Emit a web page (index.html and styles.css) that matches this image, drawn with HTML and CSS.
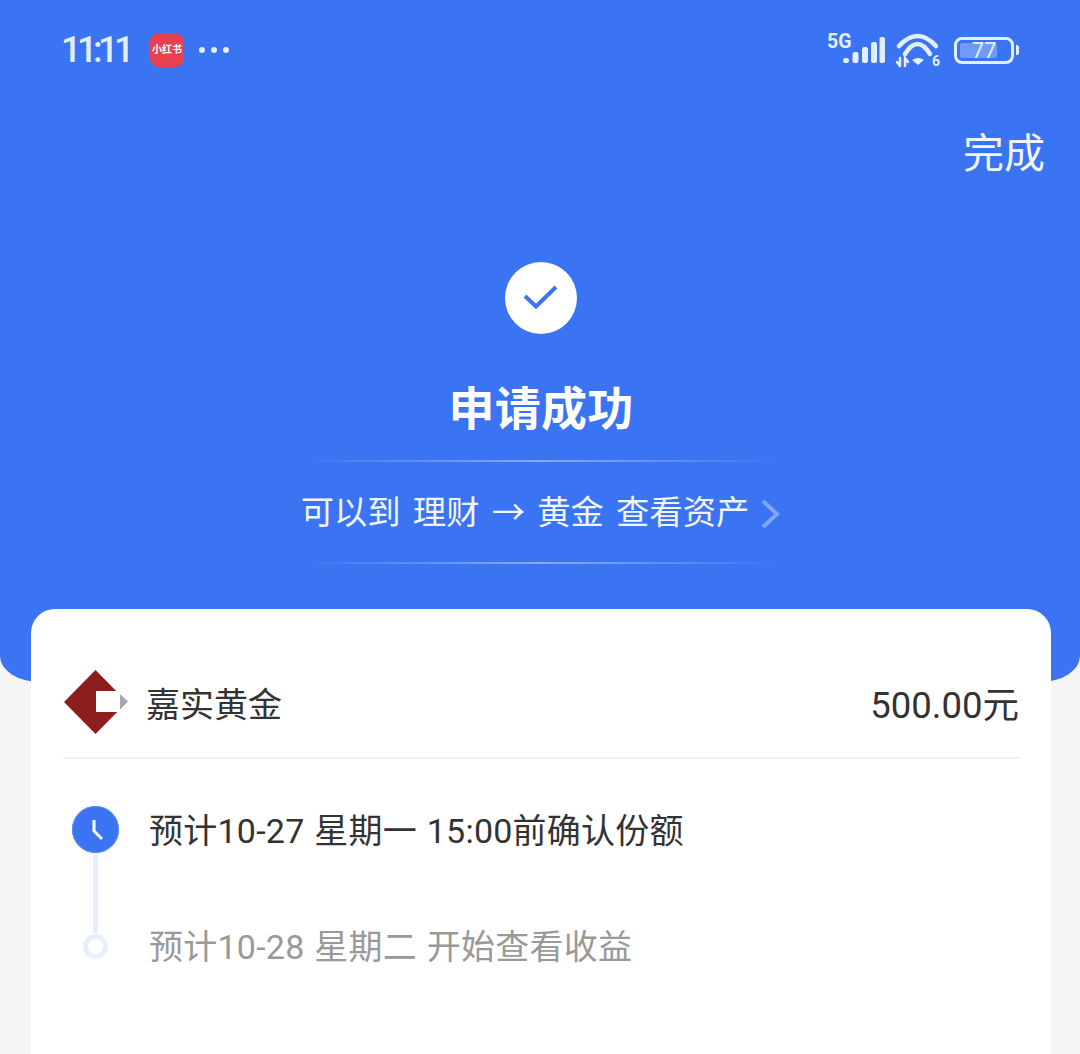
FILE: index.html
```html
<!DOCTYPE html>
<html lang="zh">
<head>
  <meta charset="UTF-8">
  <title>申请成功</title>
  <link rel="stylesheet" href="styles.css">
</head>
<body>
  <div class="hero">
    <!-- 状态栏 -->
    <div class="status-bar">
      <div class="status-left">
        <span class="clock">11:11</span>
        <span class="app-badge">小红书</span>
        <span class="dots"><i></i><i></i><i></i></span>
      </div>
      <div class="status-right">
        <svg class="signal" width="61" height="40" viewBox="0 0 61 40">
          <text x="3" y="18" class="net-label">5G</text>
          <rect x="19" y="28" width="6" height="5" rx="2.500" />
          <rect x="28.500" y="22" width="6" height="11" rx="2" />
          <rect x="38" y="17" width="6" height="16" rx="2" />
          <rect x="47" y="12" width="6" height="21" rx="2" />
          <rect x="55.500" y="7" width="5.500" height="26" rx="2" />
        </svg>
        <svg class="wifi" width="46" height="40" viewBox="0 0 46 40">
          <path d="M5 16 Q23.500 -4 42 16" />
          <path d="M11 24 Q23.500 4 36 24" />
          <path d="M24 35 L18 30 Q24 26 30 30 Z" class="wifi-fill" />
          <path d="M6 28 v8 M3 32 l3 4 M11 36 v-8 l3 4" class="wifi-thin" />
          <text x="38" y="36" class="wifi-six">6</text>
        </svg>
        <div class="battery">
          <div class="battery-body">
            <div class="battery-level" style="width: 77%"></div>
            <span class="battery-num">77</span>
          </div>
          <div class="battery-cap"></div>
        </div>
      </div>
    </div>

    <div class="done-row"><span class="done-btn">完成</span></div>

    <div class="result">
      <div class="check-circle">
        <svg width="38" height="30" viewBox="0 0 38 30">
          <path d="M3 13 L14 23.500 L34 4" />
        </svg>
      </div>
      <h1 class="result-title">申请成功</h1>
      <div class="tip-box">
        <span class="tip-text">可以到 理财 → 黄金 查看资产</span>
        <svg class="tip-arrow" width="20" height="30" viewBox="0 0 20 30">
          <path d="M2 2 L16 15 L2 28" />
        </svg>
      </div>
    </div>
  </div>

  <div class="card">
    <div class="fund-row">
      <div class="fund-info">
        <svg class="fund-logo" width="66" height="66" viewBox="0 0 66 66">
          <path d="M32.500 1 L64 33 L32.500 65 L1 33 Z" fill="#8c1e1c" />
          <rect x="33" y="22" width="24" height="21" fill="#fff" />
          <path d="M57 25 L65 32.500 L57 40 Z" fill="#a9a9ad" />
        </svg>
        <span class="fund-name">嘉实黄金</span>
      </div>
      <span class="fund-amount">500.00元</span>
    </div>

    <div class="timeline">
      <div class="step">
        <div class="step-marker">
          <div class="step-clock">
            <svg width="46" height="46" viewBox="0 0 46 46">
              <path d="M22 14 V25 L30 33" />
            </svg>
          </div>
          <div class="step-line"></div>
        </div>
        <div class="step-text">预计10-27 星期一 15:00前确认份额</div>
      </div>
      <div class="step step-next">
        <div class="step-marker">
          <div class="step-ring"></div>
        </div>
        <div class="step-text">预计10-28 星期二 开始查看收益</div>
      </div>
    </div>
  </div>
</body>
</html>
```

FILE: styles.css
```css
html, body {
  margin: 0;
  padding: 0;
}

body {
  width: 1080px;
  height: 1054px;
  overflow: hidden;
  background: #f5f5f5;
  font-family: "Roboto", "Noto Sans CJK SC", sans-serif;
}

.hero {
  height: 682px;
  box-sizing: border-box;
  background: #3a74f2;
  border-radius: 0 0 40px 40px / 0 0 26px 26px;
  color: #fff;
}

/* === 状态栏 === */
.status-bar {
  height: 100px;
  box-sizing: border-box;
  padding: 30px 61px 0 61px;
  display: flex;
  justify-content: space-between;
  align-items: flex-start;
}

.status-left {
  display: flex;
  align-items: center;
  height: 40px;
}

.clock {
  font-size: 36px;
  font-weight: 500;
  letter-spacing: -4.500px;
  color: #e3eefe;
  width: 89px;
}

.app-badge {
  width: 34px;
  height: 34px;
  border-radius: 9px;
  background: #e8404f;
  font-size: 10px;
  font-weight: 700;
  line-height: 34px;
  text-align: center;
  white-space: nowrap;
}

.dots {
  display: flex;
  gap: 6px;
  margin-left: 15px;
}

.dots i {
  width: 6px;
  height: 6px;
  border-radius: 50%;
  background: #e3eefe;
}

.status-right {
  display: flex;
  align-items: flex-start;
  gap: 9px;
}

.signal rect {
  fill: #e3eefe;
}

.net-label {
  font-size: 19.500px;
  font-weight: 700;
  fill: #e3eefe;
}

.wifi path {
  fill: none;
  stroke: #e3eefe;
  stroke-width: 4.500px;
  stroke-linecap: round;
}

.wifi .wifi-fill {
  fill: #e3eefe;
  stroke: none;
}

.wifi .wifi-thin {
  stroke-width: 2.500px;
}

.wifi-six {
  font-size: 14px;
  font-weight: 700;
  fill: #e3eefe;
}

.battery {
  display: flex;
  align-items: center;
  gap: 2px;
  margin-left: 5px;
  height: 40px;
}

.battery-body {
  position: relative;
  width: 60px;
  height: 27px;
  box-sizing: border-box;
  border: 3px solid #e3eefe;
  border-radius: 8px;
  padding: 3px;
}

.battery-level {
  height: 100%;
  background: #6f9af6;
  border-radius: 2px;
}

.battery-num {
  position: absolute;
  left: 0;
  right: 0;
  top: 0;
  text-align: center;
  font-size: 22px;
  line-height: 21px;
  color: #e3eefe;
}

.battery-cap {
  width: 3px;
  height: 10px;
  background: #e3eefe;
  border-radius: 0 2px 2px 0;
}

/* === 结果区 === */
.done-row {
  display: flex;
  justify-content: flex-end;
  padding-right: 35px;
  height: 62px;
  margin-top: 23px;
}

.done-btn {
  font-size: 41px;
  line-height: 62px;
  color: #f1f5fe;
}

.result {
  display: flex;
  flex-direction: column;
  align-items: center;
  padding-top: 77px;
}

.check-circle {
  width: 72px;
  height: 72px;
  margin-left: 2px;
  border-radius: 50%;
  background: #fff;
  display: flex;
  align-items: center;
  justify-content: center;
}

.check-circle svg path {
  fill: none;
  stroke: #3a74f2;
  stroke-width: 4px;
}

.result-title {
  margin: 0;
  padding-top: 40px;
  font-size: 46px;
  font-weight: 700;
  letter-spacing: 0.200px;
  line-height: 70px;
  margin-left: 2px;
}

.tip-box {
  width: 476px;
  height: 104px;
  box-sizing: border-box;
  margin-top: 16px;
  margin-left: 2px;
  padding-bottom: 6px;
  display: flex;
  align-items: center;
  justify-content: center;
  gap: 12px;
  border-top: 2px solid;
  border-bottom: 2px solid;
  border-image: linear-gradient(90deg, rgba(255,255,255,0), rgba(255,255,255,0.4) 50%, rgba(255,255,255,0)) 1;
}

.tip-text {
  font-size: 33.300px;
  word-spacing: 4px;
  white-space: nowrap;
  color: #f1f5fe;
}

.tip-arrow {
  flex-shrink: 0;
  margin-top: 10px;
}

.tip-arrow path {
  fill: none;
  stroke: #7fa5f7;
  stroke-width: 4px;
}

/* === 卡片 === */
.card {
  position: relative;
  margin: -73px 29px 0 31px;
  height: 445px;
  background: #fff;
  border-radius: 24px 24px 0 0;
  padding: 0 32px;
}

.fund-row {
  height: 150px;
  display: flex;
  align-items: center;
  justify-content: space-between;
  border-bottom: 2px solid #f0f0f0;
  padding-top: 38px;
  box-sizing: border-box;
}

.fund-info {
  display: flex;
  align-items: center;
  gap: 17px;
}

.fund-logo {
  display: block;
}

.fund-name {
  font-size: 34px;
  color: #333;
}

.fund-amount {
  font-size: 36.500px;
  color: #333;
}

.timeline {
  padding-top: 47px;
}

.step {
  display: flex;
  height: 116px;
}

.step-marker {
  width: 86px;
  padding-left: 9px;
  box-sizing: border-box;
  display: flex;
  flex-direction: column;
  align-items: flex-start;
  flex-shrink: 0;
}

.step-clock {
  width: 47px;
  height: 47px;
  border-radius: 50%;
  background: #3a74f2;
  box-shadow: inset 0 0 0 1px #5f8ef0;
  flex-shrink: 0;
}

.step-clock svg {
  display: block;
}

.step-clock path {
  fill: none;
  stroke: #fff;
  stroke-width: 3px;
}

.step-line {
  width: 5px;
  height: 80px;
  flex-shrink: 0;
  margin-left: 21px;
  background: #e6effb;
}

.step-ring {
  width: 25px;
  height: 25px;
  box-sizing: border-box;
  margin: 12px 0 0 11px;
  border: 5px solid #e6effb;
  border-radius: 50%;
}

.step-text {
  font-size: 34px;
  letter-spacing: 0.250px;
  word-spacing: 1px;
  line-height: 47px;
  margin-top: 2px;
  color: #333;
  white-space: nowrap;
}

.step-next .step-text {
  color: #999;
}
```
